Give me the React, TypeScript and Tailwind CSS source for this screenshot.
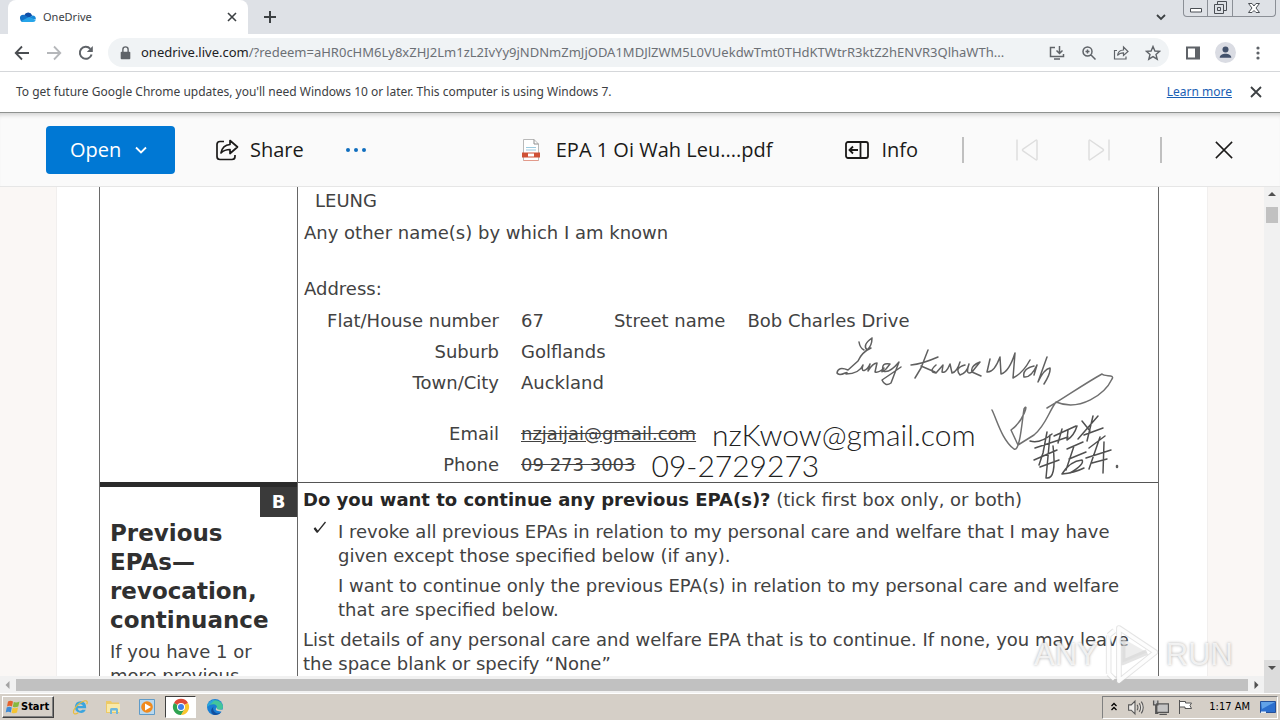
import type { ReactNode } from "react";

type IconProps = { d: string; className?: string; size?: string };

const chromeFont = "font-['Noto_Sans','Open_Sans',sans-serif]";
const docFont = "font-['DejaVu_Sans',sans-serif]";

function Stroke({ d, className = "", size = "size-4" }: IconProps) {
  return (
    <svg viewBox="0 0 16 16" className={`${size} shrink-0 ${className}`} fill="none" stroke="currentColor" aria-hidden="true">
      <path d={d} />
    </svg>
  );
}

function IconButton({ label, children, className = "" }: { label: string; children: ReactNode; className?: string }) {
  return (
    <button type="button" aria-label={label} className={`flex shrink-0 items-center justify-center ${className}`}>
      {children}
    </button>
  );
}

function OneDriveLogo() {
  return (
    <svg viewBox="0 0 16 10" className="h-[10px] w-4" aria-hidden="true">
      <path d="M4.2 3.2A4.3 4.3 0 0 1 12.2 3.4L8 7Z" fill="#0f4fa8" />
      <path d="M0.2 7.2A3.2 3.2 0 0 1 4.6 3.1L10.5 6.6 3 10C1.4 10 .3 8.6.2 7.2Z" fill="#1272c8" />
      <path d="M10 5.2 12.3 3.4A3.2 3.2 0 0 1 15.6 7.6L10 6.5Z" fill="#1688d8" />
      <path d="M1.2 9 9 4.9 15.7 8A2.8 2.8 0 0 1 13.2 10H3.2Q2 10 1.2 9Z" fill="#27a5e9" />
    </svg>
  );
}

function TabStrip() {
  return (
    <div className="flex h-[34px] shrink-0 items-start bg-[#dee1e6] pl-2">
      <div className="flex h-[34px] w-60 items-center rounded-t-lg bg-white pl-3 pr-2">
        <OneDriveLogo />
        <span className="ml-[7px] flex-1 text-[11px] leading-4 text-[#3c4043]">OneDrive</span>
        <IconButton label="Close tab" className="size-4 text-[#3c4043]">
          <Stroke d="M4 4 12 12M12 4 4 12" className="stroke-[1.6]" />
        </IconButton>
      </div>
      <IconButton label="New tab" className="mt-[9px] ml-[14px] size-4 text-[#3c4043]">
        <Stroke d="M8 2V14M2 8H14" className="stroke-2" />
      </IconButton>
      <div className="flex-1" />
      <IconButton label="Search tabs" className="mt-[9px] mr-[14px] size-4 text-[#3c4043]">
        <Stroke d="M4 6 8 10 12 6" className="stroke-[1.8]" />
      </IconButton>
      <div className="mr-1 flex h-[17px] divide-x divide-[#8b8f96] rounded-b-[4px] border border-t-0 border-[#8b8f96] text-[#4b4f55]">
        <IconButton label="Minimize" className="w-6">
          <Stroke d="M2.5 8.5H13.5V12H2.5Z" className="fill-white" />
        </IconButton>
        <IconButton label="Restore" className="w-[25px]">
          <Stroke d="M5.5 5V1.500H14.500V10.500H11.500M2.500 4.500H11.500V13.500H2.500ZM5.500 7.500H8.500V10.500H5.500Z" />
        </IconButton>
        <IconButton label="Close" className="w-[42px]">
          <Stroke d="M2.5 3.500H6L8 6 10 3.500H13.500L10 8 13.500 12.500H10L8 10.500 6 12.500H2.500L6 8Z" className="fill-white" />
        </IconButton>
      </div>
    </div>
  );
}

function AddressBar() {
  return (
    <div className="flex h-[38px] shrink-0 items-center border-b border-[#d5d7da] bg-white pr-3.5 pl-3.5 text-[#5f6368]">
      <IconButton label="Back" className="size-4 text-[#4a4d51]">
        <Stroke d="M15 8H2M8 1.500 1.700 8 8 14.500" className="stroke-[1.8]" />
      </IconButton>
      <IconButton label="Forward" className="ml-4 size-4 text-[#b5b7ba]">
        <Stroke d="M1 8H14M8 1.500 14.300 8 8 14.500" className="stroke-[1.8]" />
      </IconButton>
      <IconButton label="Reload" className="ml-4 size-4">
        <svg viewBox="0 0 16 16" className="size-4" fill="none" stroke="currentColor" strokeWidth="2" aria-hidden="true">
          <path d="M13.600 9.500A6 6 0 1 1 12.300 3.800" />
          <path d="M14.800 1V7H8.800Z" fill="currentColor" stroke="none" />
        </svg>
      </IconButton>
      <div className="ml-[14px] flex h-[29px] min-w-0 flex-1 items-center rounded-full bg-[#f0f3f5] pr-2 pl-3">
        <svg viewBox="0 0 12 16" className="h-3.5 w-[11px] shrink-0" aria-hidden="true">
          <path d="M1.500 6.500H10.500A1 1 0 0 1 11.500 7.500V14A1 1 0 0 1 10.500 15H1.500A1 1 0 0 1 .5 14V7.500A1 1 0 0 1 1.500 6.500Z" fill="currentColor" />
          <path d="M3 7V4A3 3 0 0 1 9 4V7" fill="none" stroke="currentColor" strokeWidth="1.600" />
        </svg>
        <div className="ml-2.5 min-w-0 flex-1 truncate text-[13px] text-[#6c7075]">
          <span className="text-[#202124]">onedrive.live.com</span>
          /?redeem=aHR0cHM6Ly8xZHJ2Lm1zL2IvYy9jNDNmZmJjODA1MDJlZWM5L0VUekdwTmt0THdKTWtrR3ktZ2hENVR3QlhaWTh...
        </div>
        <div className="ml-4 flex gap-4">
          <IconButton label="Install app">
            <Stroke d="M6 2.500H1.500V11.500H14.500V9M5 14H11M10.500 1V8M7.500 5.500 10.500 8.500 13.500 5.500" className="stroke-[1.500]" />
          </IconButton>
          <IconButton label="Zoom">
            <Stroke d="M11 6.500A4.500 4.500 0 1 1 2 6.500 4.500 4.500 0 0 1 11 6.500ZM9.800 9.800 14.500 14.500M4.500 6.500H8.500M6.500 4.500V8.500" className="stroke-[1.500]" />
          </IconButton>
          <IconButton label="Share this page">
            <Stroke d="M4 5.500H1.500V14H13V11.500M4.500 10.500C5 7 7 5 10.500 5V2L15 6.500 10.500 10.500V7.800C8 7.800 6 8.500 4.500 10.500Z" className="stroke-[1.200]" />
          </IconButton>
          <IconButton label="Bookmark this tab">
            <Stroke d="M8 1.500 9.900 6 14.700 6.300 11 9.400 12.200 14.200 8 11.600 3.800 14.200 5 9.400 1.300 6.300 6.100 6Z" className="stroke-[1.400]" />
          </IconButton>
        </div>
      </div>
      <IconButton label="Side panel" className="ml-4 size-4">
        <svg viewBox="0 0 16 16" className="size-4" aria-hidden="true">
          <path d="M1 1.500H15V14.500H1ZM3 3.500V12.500H10V3.500Z" fill="currentColor" fillRule="evenodd" />
        </svg>
      </IconButton>
      <IconButton label="Profile" className="ml-[14px] size-[21px] rounded-full bg-[#dadce3] text-[#42516b]">
        <svg viewBox="0 0 16 16" className="size-[15px]" fill="currentColor" aria-hidden="true">
          <circle cx="8" cy="4.800" r="3.200" />
          <path d="M1.800 13.500C1.800 10.500 5 9.300 8 9.300S14.200 10.500 14.200 13.500Z" />
        </svg>
      </IconButton>
      <IconButton label="Chrome menu" className="ml-[14px] size-4">
        <svg viewBox="0 0 16 16" className="size-4" fill="currentColor" aria-hidden="true">
          <circle cx="8" cy="3" r="1.600" />
          <circle cx="8" cy="8" r="1.600" />
          <circle cx="8" cy="13" r="1.600" />
        </svg>
      </IconButton>
    </div>
  );
}

function UpdateNotice() {
  return (
    <div className="flex h-[41px] shrink-0 items-center border-b border-[#8f9290] bg-white px-4 text-xs text-[#3c4043]">
      <p className="flex-1">To get future Google Chrome updates, you'll need Windows 10 or later. This computer is using Windows 7.</p>
      <a href="#update" className="text-[#1a5fb4] underline">
        Learn more
      </a>
      <IconButton label="Dismiss" className="ml-4 size-4">
        <Stroke d="M3 3 13 13M13 3 3 13" className="stroke-[1.800]" />
      </IconButton>
    </div>
  );
}

function ViewerBar() {
  return (
    <header className="flex h-[74px] shrink-0 items-center border-b border-[#e6e6e6] bg-[#fafafa] pr-[46px] pl-[46px] font-['Open_Sans','Noto_Sans',sans-serif] text-xl text-[#1b1a19] shadow-[inset_0_5px_4px_-3px_#d2d2d2]">
      <button type="button" className="flex h-12 w-[129px] items-center gap-3 rounded-[4px] bg-[#0078d4] pl-6 text-white">
        Open
        <Stroke d="M3 5.500 8 10.500 13 5.500" className="stroke-[1.800]" />
      </button>
      <button type="button" className="ml-10 flex items-center gap-[11px]">
        <svg viewBox="0 0 24 24" className="size-6" fill="none" stroke="currentColor" strokeWidth="1.700" strokeLinejoin="round" aria-hidden="true">
          <path d="M9 3.500H5A3 3 0 0 0 2 6.500V18.500A3 3 0 0 0 5 21.500H17A3 3 0 0 0 20 18.500V17" />
          <path d="M6 15C7 9.500 10 6.800 15 6.500V2.500L22.500 9 15 15.500V11.500C11 11.500 8.500 12.500 6 15Z" />
        </svg>
        Share
      </button>
      <IconButton label="More actions" className="ml-[41px] text-[#106ebe]">
        <svg viewBox="0 0 22 6" className="h-1.5 w-[22px]" fill="currentColor" aria-hidden="true">
          <circle cx="3" cy="3" r="2" />
          <circle cx="11" cy="3" r="2" />
          <circle cx="19" cy="3" r="2" />
        </svg>
      </IconButton>
      <div className="flex flex-1 items-center justify-end gap-[14px] pr-[73px]">
        <svg viewBox="0 0 22 24" className="h-6 w-[22px]" aria-hidden="true">
          <path d="M3.500 1.500H14L18.500 6V22.500H3.500Z" fill="#fff" stroke="#b9b9b9" />
          <path d="M14 1.500V6H18.500" fill="none" stroke="#8f8f8f" />
          <path d="M6 9.500H16M6 12H16" stroke="#9ccbe0" />
          <path d="M2 14.500H20V19.500H2Z" fill="#cf5136" />
          <path d="M8 15.500H14V18.500H8Z" fill="#fff" />
          <path d="M3.500 22.500H18.500" stroke="#e39a8a" />
        </svg>
        <h1>EPA 1 Oi Wah Leu....pdf</h1>
      </div>
      <button type="button" className="flex items-center gap-3">
        <svg viewBox="0 0 24 24" className="size-6" fill="none" stroke="currentColor" strokeWidth="1.800" aria-hidden="true">
          <rect x="1" y="4" width="22" height="16" rx="2" />
          <path d="M15.500 4V20M13 12H4.500M8 8.500 4.500 12 8 15.500" />
        </svg>
        Info
      </button>
      <span className="ml-11 h-[26px] w-0.5 bg-[#c0c0c0]" />
      <IconButton label="Previous file" className="ml-[51px] text-[#dedede]">
        <svg viewBox="0 0 24 24" className="size-6" fill="none" stroke="currentColor" strokeWidth="1.500" strokeLinejoin="round" aria-hidden="true">
          <path d="M2 1.500V22.500M22 3V21Q22 22.500 20.500 21.500L8 12.800Q7 12 8 11.200L20.500 2.500Q22 1.500 22 3Z" />
        </svg>
      </IconButton>
      <IconButton label="Next file" className="ml-12 text-[#dedede]">
        <svg viewBox="0 0 24 24" className="size-6" fill="none" stroke="currentColor" strokeWidth="1.500" strokeLinejoin="round" aria-hidden="true">
          <path d="M22 1.500V22.500M2 3V21Q2 22.500 3.500 21.500L16 12.800Q17 12 16 11.200L3.500 2.500Q2 1.500 2 3Z" />
        </svg>
      </IconButton>
      <span className="ml-[49px] h-[26px] w-0.5 bg-[#c0c0c0]" />
      <IconButton label="Close file" className="ml-[52px]">
        <Stroke d="M1.500 1.500 14.500 14.500M14.500 1.500 1.500 14.500" size="size-5" className="stroke-[1.200]" />
      </IconButton>
    </header>
  );
}

function Signature() {
  return (
    <svg
      viewBox="830 332 296 150"
      className="absolute right-8 bottom-0 h-[150px] w-[296px]"
      fill="none"
      stroke="#606060"
      strokeWidth="1.500"
      strokeLinecap="round"
      strokeLinejoin="round"
      role="img"
      aria-label="Signature"
    >
      <path d="M859 342Q860 348 864 350M872 338Q862 345 867 350 872 346 872 338M871 348Q862 352 858 361L848 370Q838 366 837 373C840 378 850 369 846 374 855 374 861 370 863 365 860 374 867 371 870 364L868 371Q873 363 877 363L875 372Q879 373 884 368 879 375 886 369L890 364Q881 362 883 371 889 374 899 362L891 383Q885 387 882 380 891 374 901 367" />
      <path d="M928 350 921 368 915 378M911 365Q922 364 938 357M921 366 935 372M936 365Q928 372 936 373L943 365 942 372Q946 374 950 364L952 373Q957 372 960 362M965 365Q954 368 960 375 967 373 969 364 965 376 972 372L980 362Q970 366 972 372L981 376M990 359 987 372Q994 373 1000 357L1001 374Q1009 372 1015 353L1013 378Q1023 373 1030 360M1034 366Q1022 369 1024 377 1031 378 1037 365L1034 375M1047 357 1038 382Q1044 369 1050 368 1051 373 1044 384" />
      <path d="M992 410C997 420 1002 440 1014 449 1020 452 1022 421 1024 409 1029 401 1024 421 1011 430L1018 445 1034 435C1046 425 1048 413 1056 402 1080 412 1105 394 1112 379 1115 374 1105 377 1102 374 1084 384 1064 398 1047 408" stroke="#707070" />
      <path d="M1030 441Q1040 444 1052 434M1035 448 1068 437M1047 432 1043 453 1039 465M1034 460 1057 450M1040 467 1059 460M1050 435 1046 478M1053 446Q1057 480 1046 478M1062 429 1058 443M1054 436 1076 426M1068 430 1067 440Q1074 436 1077 426M1082 421 1090 431M1078 439 1098 416M1093 416 1087 441M1084 435 1103 428M1067 449 1083 442M1069 459 1086 452M1074 446 1066 470M1070 473Q1085 464 1082 460 1070 461 1062 474 1074 473 1084 468M1089 448 1105 436M1086 458 1111 450M1092 463 1107 459M1100 437 1089 469M1104 442 1103 473" stroke="#505050" />
      <path d="M1117 466V467" strokeWidth="2.500" />
    </svg>
  );
}

function AddressRow({ label, children }: { label: string; children: ReactNode }) {
  return (
    <div className="flex h-[31px] items-center">
      <dt className="w-[195px] shrink-0 text-right">{label}</dt>
      <dd className="ml-[22px] flex items-center">{children}</dd>
    </div>
  );
}

function DocumentPage() {
  return (
    <article className={`mx-14 border-x border-[#f1efee] bg-white pr-[48px] pl-[42px] text-lg leading-6 text-[#424242] ${docFont}`}>
      <div className="grid grid-cols-[198px_1fr] border-x border-l-[#6a6a6a] border-r-[#6a6a6a]">
        <div className="border-r border-[#666]" />
        <section className="relative h-[295px] pt-0.5 pl-1.5">
          <p className="pl-[11px]">LEUNG</p>
          <p className="mt-2">Any other name(s) by which I am known</p>
          <p className="mt-8">Address:</p>
          <dl className="mt-1">
            <AddressRow label="Flat/House number">
              67
              <span className="ml-[70px]">Street name</span>
              <span className="ml-[22px]">Bob Charles Drive</span>
            </AddressRow>
            <AddressRow label="Suburb">Golflands</AddressRow>
            <AddressRow label="Town/City">Auckland</AddressRow>
            <div className="h-5" />
            <AddressRow label="Email">
              <s>
                <u>nzjaijai@gmail.com</u>
              </s>
              <span className="ml-4 font-['Lato','Open_Sans',sans-serif] text-[30px] font-light text-[#222]">nzKwow@gmail.com</span>
            </AddressRow>
            <AddressRow label="Phone">
              <s>09 273 3003</s>
              <span className="ml-4 font-['Lato','Open_Sans',sans-serif] text-[30px] font-light text-[#222]">09-2729273</span>
            </AddressRow>
          </dl>
          <Signature />
        </section>

        <aside className="border-r border-[#666] pb-2">
          <div className="flex justify-end border-t-[5px] border-[#2b2b2b]">
            <span className="flex h-[30px] w-[37px] items-center justify-center bg-[#3a3a3a] font-bold text-white">B</span>
          </div>
          <h2 className="mt-0.5 pl-2.5 text-[23px] leading-[29px] font-bold text-[#303030]">
            Previous
            <br />
            EPAs—
            <br />
            revocation,
            <br />
            continuance
          </h2>
          <p className="mt-[5px] pl-2.5">
            If you have 1 or
            <br />
            more previous
          </p>
        </aside>
        <section className="border-t border-[#555] pt-[5px] pl-[5px]">
          <h3>
            <b className="text-[#262626]">Do you want to continue any previous EPA(s)?</b> (tick first box only, or both)
          </h3>
          <ul className="mt-2 flex flex-col gap-1.5">
            <li className="flex">
              <svg viewBox="0 0 16 16" className="ml-[9px] size-4 shrink-0" aria-label="Ticked" role="img">
                <path d="M2.500 8 5.500 12 13.500 2" fill="none" stroke="#2b2b2b" strokeWidth="1.300" />
                <path d="M2.500 8 5.500 12" fill="none" stroke="#2b2b2b" strokeWidth="2.200" />
              </svg>
              <span className="ml-2.5">
                I revoke all previous EPAs in relation to my personal care and welfare that I may have
                <br />
                given except those specified below (if any).
              </span>
            </li>
            <li className="pl-[35px]">
              I want to continue only the previous EPA(s) in relation to my personal care and welfare
              <br />
              that are specified below.
            </li>
          </ul>
          <p className="mt-1.5">
            List details of any personal care and welfare EPA that is to continue. If none, you may leave
            <br />
            the space blank or specify “None”
          </p>
        </section>
      </div>
    </article>
  );
}

function Watermark() {
  return (
    <div className="pointer-events-none absolute right-[47px] bottom-2 flex items-center gap-1.5 font-['Liberation_Sans',sans-serif] text-[31px] leading-[60px] text-white/75 [text-shadow:0_0_3px_#aaa]">
      <span>ANY</span>
      <svg viewBox="0 0 60 64" className="h-[60px] w-14" fill="none" stroke="#fff" strokeWidth="4" strokeLinejoin="round" aria-hidden="true">
        <path d="M16 3 55 29 16 60ZM5 11V52M5 11 11 6M5 52 11 58M20 14V40L46 29" stroke="#c9c9c9" strokeOpacity=".5" strokeWidth="6" />
        <path d="M16 3 55 29 16 60ZM5 11V52M5 11 11 6M5 52 11 58" strokeOpacity=".9" />
        <path d="M20 14V40L46 29Z" fill="#d8d8d8" fillOpacity=".45" stroke="none" />
      </svg>
      <span>RUN</span>
    </div>
  );
}

function Viewport() {
  return (
    <div className="grid min-h-0 flex-1 grid-cols-[1fr_16px] grid-rows-[1fr_17px]">
      <main className="relative min-h-0 overflow-hidden bg-[#faf7f5]">
        <DocumentPage />
      </main>
      <div className="flex flex-col items-center justify-between bg-[#f1f1f1]">
        <div className="flex flex-col items-center">
          <Stroke d="M4 9 8 5 12 9Z" className="fill-[#505050] stroke-none" />
          <span className="mt-1 h-4 w-3 bg-[#c1c1c1]" />
        </div>
        <Stroke d="M4 6 8 10 12 6Z" className="bg-[#dcdcdc] fill-[#505050] stroke-none" />
      </div>
      <div className="flex items-center bg-[#f1f1f1]">
        <Stroke d="M9.500 4 5.500 8 9.500 12Z" className="fill-[#a3a3a3] stroke-none" />
        <span className="h-3 flex-1 bg-[#c1c1c1]" />
        <Stroke d="M6.500 4 10.500 8 6.500 12Z" className="fill-[#505050] stroke-none" />
      </div>
      <div className="bg-[#dcdcdc]" />
    </div>
  );
}

function ExplorerIcon() {
  return (
    <svg viewBox="0 0 18 18" className="size-[18px]" aria-hidden="true">
      <path d="M9.500 2.500A6.500 6.500 0 1 0 15.500 12H11.500Q10 13.800 8 13 6.500 12.200 6.500 10.500H16Q16.500 3 9.500 2.500ZM6.500 7.800Q7.500 5.800 9.500 5.900 12 6 12.200 7.800Z" fill="#3ba5de" fillRule="evenodd" />
      <path d="M2.500 16.500C-.5 14 6 4.500 14.500 2 17.500 1.500 17.500 4 16.500 6M2.500 16.500C3.500 17 5.500 16.500 7 15.500" fill="none" stroke="#e8bd3c" strokeWidth="1.300" />
    </svg>
  );
}

function ChromeIcon() {
  return (
    <svg viewBox="0 0 18 18" className="size-[18px]" aria-hidden="true">
      <path d="M9 9 2 5A8 8 0 0 1 16 5Z" fill="#df4a38" />
      <path d="M9 9 2 5A8 8 0 0 0 9 17L13 11Z" fill="#2fa351" />
      <path d="M9 9 16 5A8 8 0 0 1 9 17L12.500 11Z" fill="#fac52e" />
      <circle cx="9" cy="9" r="4" fill="#fff" />
      <circle cx="9" cy="9" r="3" fill="#3f7fea" />
    </svg>
  );
}

function StartLogo() {
  return (
    <svg viewBox="0 0 16 16" className="size-4" aria-hidden="true">
      <path d="M3 2.500Q5.500 1 8 2.500L7 7.500Q4.500 6 2 7.500Z" fill="#e5622c" />
      <path d="M8.800 3Q11.500 4 14.500 2.500L13.300 7.500Q10.500 9 7.800 7.800Z" fill="#86b83d" />
      <path d="M1.700 8.500Q4.200 7 6.800 8.500L5.800 13.500Q3.300 12 .7 13.500Z" fill="#3f8bd6" />
      <path d="M7.600 8.800Q10.300 10 13 8.500L12 13.500Q9.300 15 6.600 13.800Z" fill="#f4c432" />
    </svg>
  );
}

function Taskbar() {
  return (
    <footer className="flex h-[27px] shrink-0 items-center border-t border-white bg-[#d5cfc7] pl-0.5 text-black">
      <button type="button" className="flex h-[22px] w-[52px] items-center border border-t-white border-r-[#404040] border-b-[#404040] border-l-white pl-0.5 font-['DejaVu_Sans_Condensed','DejaVu_Sans',sans-serif] text-[11px] font-bold shadow-[inset_-1px_-1px_0_#808080]">
        <StartLogo />
        Start
      </button>
      <nav aria-label="Applications" className="ml-[18px] flex items-center">
        <IconButton label="Internet Explorer" className="w-4">
          <ExplorerIcon />
        </IconButton>
        <IconButton label="File Explorer" className="ml-4 w-[18px]">
          <svg viewBox="0 0 18 18" className="size-[18px]" aria-hidden="true">
            <path d="M2 3H7L8 4.500H15V15H2Z" fill="#edca66" />
            <path d="M3 6H16V14H3Z" fill="#f9e9a8" />
            <path d="M6 16V11.500Q6 10 7.500 10H12.500Q14 10 14 11.500V16H12V12.500H8V16Z" fill="#6eb7dd" />
          </svg>
        </IconButton>
        <IconButton label="Media Player" className="ml-4 w-[18px]">
          <svg viewBox="0 0 18 18" className="size-[18px]" aria-hidden="true">
            <path d="M1.500 1.500H16.500V16.500H1.500Z" fill="#b9d8ee" stroke="#5f9bc8" />
            <circle cx="9" cy="9" r="5.800" fill="#f08a1d" />
            <path d="M7 5.500 13 9 7 12.500Z" fill="#fff" />
          </svg>
        </IconButton>
        <IconButton label="Google Chrome" className="ml-[9px] h-[22px] w-[31px] border border-t-[#404040] border-r-white border-b-white border-l-[#404040] bg-white">
          <ChromeIcon />
        </IconButton>
        <IconButton label="Microsoft Edge" className="ml-2.5 w-[18px]">
          <svg viewBox="0 0 18 18" className="size-[18px]" aria-hidden="true">
            <circle cx="9" cy="9" r="8" fill="#1a7fd4" />
            <path d="M1.500 8A8 8 0 0 1 17 8.500Q17 12 13 12 10 12 11 9.500 11 6.500 7.500 6.300 4 6.200 1.500 8Z" fill="#43c59b" />
            <path d="M1.300 7Q4 2 9 1.700 6 5 1.300 9Z" fill="#2aa6dd" />
            <path d="M7.500 8.500Q6 13 10 15 13 16 15.500 14 12 18.500 7 16.500 3 13 7.500 8.500Z" fill="#124f9e" />
            <path d="M11 9Q9.500 12.500 16.500 11.500L17.500 14 12 13Q8 12 11 9Z" fill="#d5cfc7" />
          </svg>
        </IconButton>
      </nav>
      <div className="ml-auto mr-0.5 flex h-[23px] items-center border border-t-[#808080] border-r-white border-b-white border-l-[#808080] pr-px pl-1.5 text-[#555]">
        <IconButton label="Show hidden icons" className="w-2.5 text-black">
          <svg viewBox="0 0 10 12" className="h-3 w-2.5" fill="none" stroke="currentColor" strokeWidth="1.300" aria-hidden="true">
            <path d="M2.500 5 5 2.500 7.500 5M2.500 9 5 6.500 7.500 9" />
          </svg>
        </IconButton>
        <IconButton label="Volume" className="ml-2">
          <Stroke d="M1.500 5.500H4L7.500 2V14L4 10.500H1.500ZM9.500 5.500Q11 8 9.500 10.500M11.500 4Q14 8 11.500 12M13.500 2.500Q17 8 13.500 13.500" size="size-[17px]" className="fill-white/60" />
        </IconButton>
        <IconButton label="Network" className="ml-2">
          <Stroke d="M4.500 4.500H15.500V12.500H4.500ZM7 14.500H14M1.500 1.500V5.500H5.500V1.500M3.500 5.500V13.500H6" size="size-[17px]" className="fill-[#c4c4c4] stroke-[1.200]" />
        </IconButton>
        <IconButton label="Action Center" className="ml-2">
          <Stroke d="M2.500 1V15M2.500 2.500H8.500V4H14.500L13 6.500 14.500 9.500H8V8H2.500" className="fill-white" />
        </IconButton>
        <time className="ml-4 font-['DejaVu_Sans_Condensed','DejaVu_Sans',sans-serif] text-[11px] text-black">1:17 AM</time>
        <IconButton label="Show desktop" className="ml-2.5 w-4">
          <svg viewBox="0 0 16 14" className="h-3.5 w-4" aria-hidden="true">
            <path d="M.5 1.500H15.500V12.500H.5Z" fill="#2c6fce" stroke="#24509a" />
            <path d="M1 2H15L2 9Z" fill="#62a2e8" />
            <path d="M1 11.500H6V13H1Z" fill="#e6eef6" />
          </svg>
        </IconButton>
      </div>
    </footer>
  );
}

export default function App() {
  return (
    <div className={`flex h-screen flex-col overflow-hidden ${chromeFont}`}>
      <TabStrip />
      <AddressBar />
      <UpdateNotice />
      <ViewerBar />
      <div className="relative flex min-h-0 flex-1 flex-col">
        <Viewport />
        <Watermark />
      </div>
      <Taskbar />
    </div>
  );
}
